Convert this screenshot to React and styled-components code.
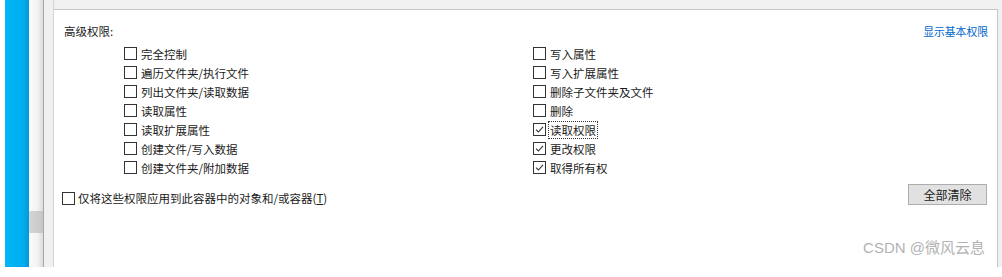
import React from "react";
import styled, { createGlobalStyle } from "styled-components";

const Global = createGlobalStyle`
  html, body { margin: 0; padding: 0; background: #fff; }
  body {
    font-family: "Noto Sans CJK SC", "Noto Sans", "Liberation Sans", sans-serif;
    font-size: 11.5px;
    color: #1a1a1a;
  }
`;

const Page = styled.div`
  width: 1002px;
  height: 277px;
  overflow: hidden;
  background: #fff;
`;

const Frame = styled.div`
  display: flex;
  height: 267px;
  padding-left: 5px;
`;

const BlueBar = styled.div`
  width: 24px;
  background: linear-gradient(to right, #00b6f6 0%, #00aef0 75%, #0598d8 100%);
`;

const ScrollStrip = styled.div`
  width: 14px;
  display: flex;
  flex-direction: column;
  padding-top: 211px;
  background: linear-gradient(to right, #fbfbfb 0%, #f2f2f2 60%, #dcdcdc 100%);
  border-right: 1px solid #a8a8a8;
`;

const Thumb = styled.div`
  height: 22px;
  background: linear-gradient(to right, #d6d6d6, #c6c6c6);
`;

const Gutter = styled.div`
  width: 9px;
  background: #f0f0f0;
  border-right: 1px solid #d4d4d4;
`;

const Main = styled.div`
  flex: 1;
  display: flex;
  flex-direction: column;
  padding-top: 9px;
  padding-right: 4px;
  background: #f0f0f0;
`;

const Panel = styled.div`
  position: relative;
  flex: 1;
  display: flex;
  flex-direction: column;
  background: #fff;
  border-top: 1px solid #c6c6c6;
  border-right: 1px solid #c6c6c6;
  padding: 13px 10px 0 8px;
`;

const Header = styled.div`
  display: flex;
  justify-content: space-between;
  align-items: center;
  height: 16px;
  line-height: 16px;
`;

const Title = styled.span`
  margin-left: 2px;
`;

const Link = styled.a`
  color: #0066cc;
  font-size: 10.8px;
  text-decoration: none;
  margin-right: -1px;
  cursor: pointer;
`;

const Grid = styled.div`
  display: grid;
  grid-template-columns: 409px auto;
  grid-auto-flow: column;
  grid-template-rows: repeat(7, 19px);
  margin: 5px 0 0 62px;
`;

const Item = styled.label`
  display: flex;
  align-items: center;
  gap: 3px;
  height: 19px;
  line-height: 16px;
  white-space: nowrap;
`;

const Box = styled.span`
  display: inline-flex;
  align-items: center;
  justify-content: center;
  width: 11px;
  height: 11px;
  border: 1px solid #333;
  background: #fff;
  flex-shrink: 0;
`;

const Caption = styled.span`
  padding: 0 1px;
  border: 1px dotted ${(p) => (p.$focus ? "#333" : "transparent")};
  margin-left: -1px;
`;

const Footer = styled.div`
  display: flex;
  justify-content: space-between;
  align-items: flex-end;
  margin-top: 7px;
`;

const ApplyItem = styled(Item)`
  height: auto;
  line-height: 14px;
`;

const Button = styled.button`
  width: 79px;
  height: 21px;
  padding: 0;
  font-family: inherit;
  font-size: 12px;
  color: #1a1a1a;
  background: #e1e1e1;
  border: 1px solid #adadad;
`;

const Watermark = styled.span`
  position: absolute;
  right: 12px;
  bottom: 10px;
  font-size: 15px;
  color: #b3b3b3;
  font-family: "Liberation Sans", "Noto Sans CJK SC", sans-serif;
`;

const Check = () => (
  <svg width="9" height="9" viewBox="0 0 9 9">
    <path d="M1 4.6 L3.4 7 L8 1.8" fill="none" stroke="#333" strokeWidth="1.1" />
  </svg>
);

const Option = ({ label, checked, focus }) => (
  <Item>
    <Box>{checked && <Check />}</Box>
    <Caption $focus={focus}>{label}</Caption>
  </Item>
);

const perms = [
  { label: "完全控制" },
  { label: "遍历文件夹/执行文件" },
  { label: "列出文件夹/读取数据" },
  { label: "读取属性" },
  { label: "读取扩展属性" },
  { label: "创建文件/写入数据" },
  { label: "创建文件夹/附加数据" },
  { label: "写入属性" },
  { label: "写入扩展属性" },
  { label: "删除子文件夹及文件" },
  { label: "删除" },
  { label: "读取权限", checked: true, focus: true },
  { label: "更改权限", checked: true },
  { label: "取得所有权", checked: true },
];

export default function App() {
  return (
    <Page>
      <Global />
      <Frame>
        <BlueBar />
        <ScrollStrip>
          <Thumb />
        </ScrollStrip>
        <Gutter />
        <Main>
          <Panel>
            <Header>
              <Title>高级权限:</Title>
              <Link>显示基本权限</Link>
            </Header>
            <Grid>
              {perms.map((p) => (
                <Option key={p.label} {...p} />
              ))}
            </Grid>
            <Footer>
              <ApplyItem>
                <Box />
                <span>
                  仅将这些权限应用到此容器中的对象和/或容器(<u>T</u>)
                </span>
              </ApplyItem>
              <Button>全部清除</Button>
            </Footer>
            <Watermark>CSDN @微风云息</Watermark>
          </Panel>
        </Main>
      </Frame>
    </Page>
  );
}
